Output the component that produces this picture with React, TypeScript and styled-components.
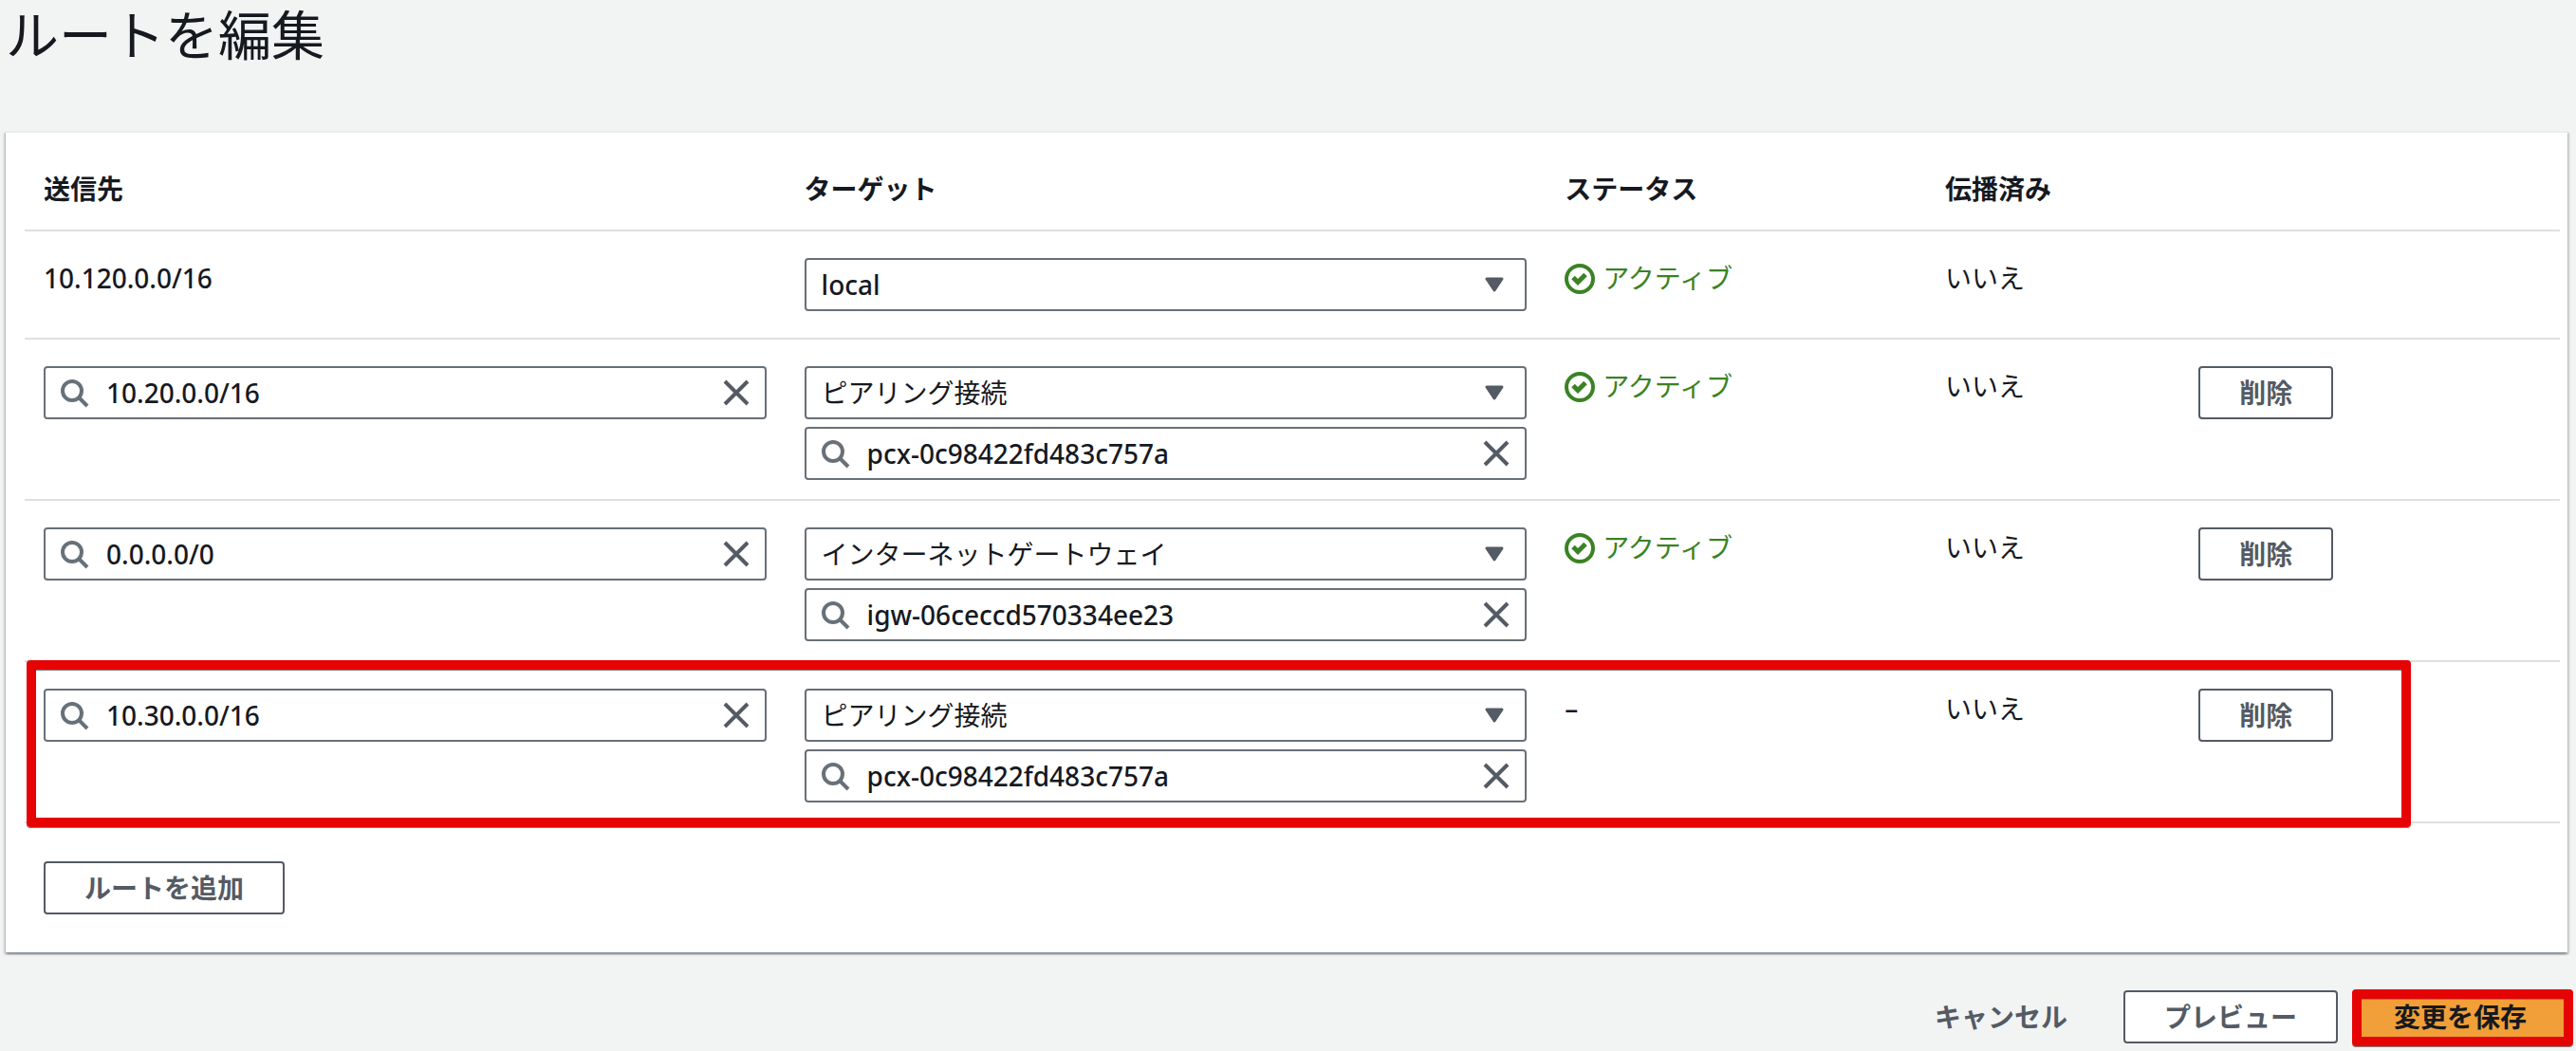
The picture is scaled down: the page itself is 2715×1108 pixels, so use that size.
import React, { useState } from 'react';
import styled, { createGlobalStyle, css } from 'styled-components';

const color = {
  page: '#f2f3f3',
  surface: '#ffffff',
  text: '#16191f',
  muted: '#545b64',
  control: '#687078',
  line: '#dfdfdf',
  success: '#3b8224',
  primary: '#f19f38',
  marker: '#e60303',
};

const GlobalStyle = createGlobalStyle`
  *, *::before, *::after {
    box-sizing: border-box;
  }

  body {
    margin: 0;
    background: ${color.page};
    color: ${color.text};
    font-family: 'Noto Sans', 'Noto Sans CJK JP', sans-serif;
    font-size: 28px;
    line-height: 44px;
  }

  button, input, select {
    font: inherit;
    color: inherit;
  }
`;

const Page = styled.main`
  padding: 0 9px 8px 6px;
`;

const Title = styled.h1`
  margin: 0 0 66px;
  font-size: 56px;
  line-height: 72px;
  font-weight: 400;
`;

const Card = styled.section`
  padding: 0 8px 40px 20px;
  border-top: 2px solid #eaeded;
  background: ${color.surface};
  box-shadow:
    0 2px 2px rgba(0, 28, 36, 0.3),
    2px 2px 2px rgba(0, 28, 36, 0.15),
    -2px 2px 2px rgba(0, 28, 36, 0.15);
`;

const Table = styled.table`
  width: 100%;
  table-layout: fixed;
  border-collapse: separate;
  border-spacing: 0;
`;

const Column = styled.col<{ $share: number }>`
  width: ${({ $share }) => $share}%;
`;

const HeadCell = styled.th`
  height: 104px;
  padding: 16px 20px 0;
  border-bottom: 2px solid ${color.line};
  text-align: left;
  font-weight: 700;
`;

const Row = styled.tr`
  position: relative;
`;

const Cell = styled.td`
  height: 114px;
  padding: 28px 20px 20px;
  border-bottom: 2px solid ${color.line};
  vertical-align: top;
  line-height: 42px;
`;

const Address = styled.span`
  font-weight: 500;
`;

const markerFrame = css`
  position: absolute;
  border: 10px solid ${color.marker};
  border-radius: 4px;
  box-shadow: 0 1px 0 #808080, inset 0 1px 0 #808080;
  pointer-events: none;
`;

const RowMarker = styled.span`
  ${markerFrame}
  inset: -2px 157px -4px 2px;
`;

const ButtonMarker = styled.span`
  ${markerFrame}
  inset: -1px -6px -3px -1px;
`;

const FieldStack = styled.div`
  display: grid;
  gap: 8px;
`;

const fieldBox = css`
  width: 100%;
  height: 56px;
  border: 2px solid ${color.control};
  border-radius: 4px;
  background: ${color.surface};
`;

const SearchField = styled.label`
  ${fieldBox}
  display: flex;
  align-items: center;
  gap: 16px;
  padding: 0 6px 0 16px;
`;

const SearchInput = styled.input`
  flex: 1;
  min-width: 0;
  height: 100%;
  padding: 0;
  border: 0;
  outline: 0;
  background: transparent;
  font-weight: 500;
`;

const ClearButton = styled.button`
  display: flex;
  padding: 8px;
  border: 0;
  background: transparent;
  color: ${color.muted};
  cursor: pointer;
`;

const SelectWrap = styled.div`
  position: relative;
`;

const Select = styled.select<{ $latin: boolean }>`
  ${fieldBox}
  display: block;
  appearance: none;
  padding: 0 56px 0 16px;
  font-weight: ${({ $latin }) => ($latin ? 500 : 400)};
`;

const Caret = styled.svg`
  position: absolute;
  top: 20px;
  right: 24px;
  color: ${color.muted};
  pointer-events: none;
`;

const Status = styled.span`
  display: flex;
  align-items: flex-end;
  gap: 8px;
  color: ${color.success};

  svg {
    margin: 6px 0 4px;
  }
`;

const Button = styled.button<{ $kind?: 'normal' | 'link' | 'primary' }>`
  height: 56px;
  padding: 0 41px;
  border: 2px solid ${color.muted};
  border-radius: 4px;
  background: ${color.surface};
  color: ${color.muted};
  font-weight: 700;
  line-height: 44px;
  white-space: nowrap;
  cursor: pointer;

  ${({ $kind }) =>
    $kind === 'link' &&
    css`
      border-color: transparent;
      background: transparent;
    `}

  ${({ $kind }) =>
    $kind === 'primary' &&
    css`
      border-color: ${color.primary};
      background: ${color.primary};
      color: ${color.text};
    `}
`;

const AddRow = styled.div`
  padding: 40px 20px 0;
  display: flex;
`;

const Actions = styled.footer`
  display: flex;
  justify-content: flex-end;
  gap: 16px;
  margin-top: 40px;
`;

const Marked = styled.div`
  position: relative;
  display: flex;
`;

const SearchIcon = () => (
  <svg width="32" height="32" viewBox="0 0 32 32" fill="none" stroke={color.control} strokeWidth="4" aria-hidden="true">
    <circle cx="12" cy="14" r="10" />
    <path d="M19.5 21.5 28 30" />
  </svg>
);

const CloseIcon = () => (
  <svg width="32" height="32" viewBox="0 0 32 32" fill="none" stroke="currentColor" strokeWidth="4" aria-hidden="true">
    <path d="M4 4 28 28M28 4 4 28" />
  </svg>
);

const CheckIcon = () => (
  <svg width="32" height="32" viewBox="0 0 32 32" fill="none" stroke="currentColor" strokeWidth="4" aria-hidden="true">
    <circle cx="16" cy="16" r="14" />
    <path d="m9 14.5 5 5 8-8" strokeWidth="5" />
  </svg>
);

const targetTypes = ['local', 'ピアリング接続', 'インターネットゲートウェイ'];

interface Route {
  destination: string;
  editable: boolean;
  targetType: string;
  targetId?: string;
  active: boolean;
  marked?: boolean;
}

const routes: Route[] = [
  { destination: '10.120.0.0/16', editable: false, targetType: 'local', active: true },
  { destination: '10.20.0.0/16', editable: true, targetType: 'ピアリング接続', targetId: 'pcx-0c98422fd483c757a', active: true },
  { destination: '0.0.0.0/0', editable: true, targetType: 'インターネットゲートウェイ', targetId: 'igw-06ceccd570334ee23', active: true },
  { destination: '10.30.0.0/16', editable: true, targetType: 'ピアリング接続', targetId: 'pcx-0c98422fd483c757a', active: false, marked: true },
];

function SearchBox({ initial, label }: { initial: string; label: string }) {
  const [value, setValue] = useState(initial);
  return (
    <SearchField>
      <SearchIcon />
      <SearchInput aria-label={label} value={value} onChange={(e) => setValue(e.target.value)} />
      <ClearButton type="button" aria-label="クリア" onClick={() => setValue('')}>
        <CloseIcon />
      </ClearButton>
    </SearchField>
  );
}

function TargetSelect({ initial }: { initial: string }) {
  const [value, setValue] = useState(initial);
  return (
    <SelectWrap>
      <Select
        aria-label="ターゲット"
        $latin={value === 'local'}
        value={value}
        onChange={(e) => setValue(e.target.value)}
      >
        {targetTypes.map((type) => (
          <option key={type}>{type}</option>
        ))}
      </Select>
      <Caret width="20" height="16" viewBox="0 0 20 16" aria-hidden="true">
        <path d="M2 2h16l-8 12z" fill="currentColor" stroke="currentColor" strokeWidth="3" strokeLinejoin="round" />
      </Caret>
    </SelectWrap>
  );
}

function RouteRow({ route }: { route: Route }) {
  return (
    <Row>
      <Cell>
        {route.editable ? (
          <SearchBox initial={route.destination} label="送信先" />
        ) : (
          <Address>{route.destination}</Address>
        )}
        {route.marked && <RowMarker />}
      </Cell>
      <Cell>
        <FieldStack>
          <TargetSelect initial={route.targetType} />
          {route.targetId && <SearchBox initial={route.targetId} label="ターゲット ID" />}
        </FieldStack>
      </Cell>
      <Cell>
        {route.active ? (
          <Status>
            <CheckIcon />
            アクティブ
          </Status>
        ) : (
          <Address>–</Address>
        )}
      </Cell>
      <Cell>いいえ</Cell>
      <Cell>{route.editable && <Button type="button">削除</Button>}</Cell>
    </Row>
  );
}

export default function App() {
  return (
    <>
      <GlobalStyle />
      <Page lang="ja">
        <Title>ルートを編集</Title>
        <Card>
          <Table>
            <colgroup>
              <Column $share={30} />
              <Column $share={30} />
              <Column $share={15} />
              <Column $share={10} />
              <Column $share={15} />
            </colgroup>
            <thead>
              <tr>
                <HeadCell scope="col">送信先</HeadCell>
                <HeadCell scope="col">ターゲット</HeadCell>
                <HeadCell scope="col">ステータス</HeadCell>
                <HeadCell scope="col">伝播済み</HeadCell>
                <HeadCell scope="col" aria-label="操作" />
              </tr>
            </thead>
            <tbody>
              {routes.map((route) => (
                <RouteRow key={route.destination} route={route} />
              ))}
            </tbody>
          </Table>
          <AddRow>
            <Button type="button">ルートを追加</Button>
          </AddRow>
        </Card>
        <Actions>
          <Button type="button" $kind="link">キャンセル</Button>
          <Button type="button">プレビュー</Button>
          <Marked>
            <Button type="button" $kind="primary">変更を保存</Button>
            <ButtonMarker />
          </Marked>
        </Actions>
      </Page>
    </>
  );
}
